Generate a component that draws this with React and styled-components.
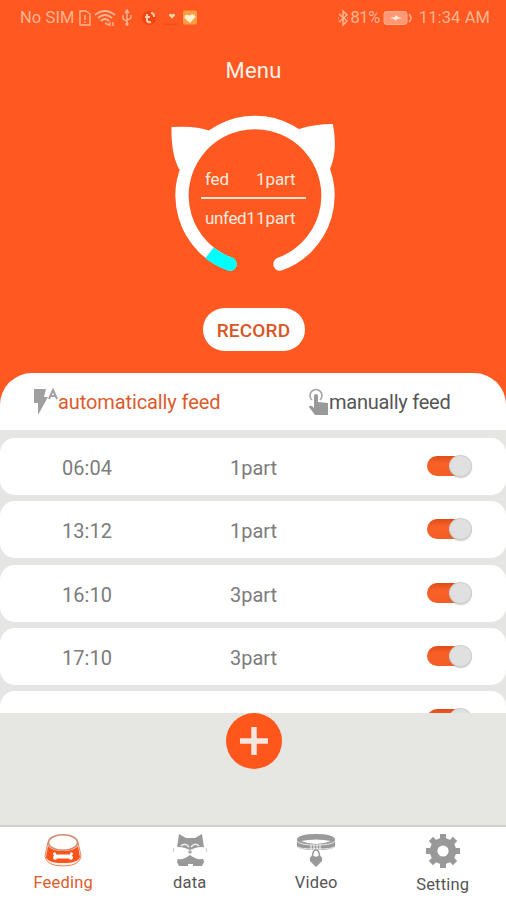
import React from "react";
import styled, { createGlobalStyle } from "styled-components";

const GlobalStyle = createGlobalStyle`
  * { box-sizing: border-box; }
  body { margin: 0; background: #fff; font-family: Roboto, "Liberation Sans", sans-serif; }
`;

const Screen = styled.main`
  width: 506px;
  height: 900px;
  overflow: hidden;
  display: flex;
  flex-direction: column;
  background: #e6e7e3;
`;

const Hero = styled.section`
  height: 373px;
  flex: none;
  background: #ff5921;
  display: flex;
  flex-direction: column;
  align-items: center;
  color: #ffe9df;
`;

const StatusBar = styled.header`
  width: 100%;
  height: 36px;
  padding: 0 16px 0 20px;
  display: flex;
  justify-content: space-between;
  align-items: center;
  font-size: 16.5px;
  line-height: 20px;
  color: #ffb492;
`;

const StatusGroup = styled.div`
  display: flex;
  align-items: center;
  white-space: nowrap;
`;

const StatusText = styled.span`
  letter-spacing: ${(p) => p.$tracking || "0"};
`;

const Title = styled.h1`
  margin: 21px 0 0 1px;
  height: 28px;
  line-height: 28px;
  font-size: 22px;
  font-weight: 400;
  letter-spacing: 0.25px;
  color: #fff1ea;
`;

const Gauge = styled.div`
  width: 170px;
  height: 166px;
  margin: 23px 0 0 4px;
  display: grid;

  > * { grid-area: 1 / 1; }
`;

const Readings = styled.div`
  width: 105px;
  margin: 61px 0 0 31px;
`;

const Reading = styled.div`
  display: grid;
  grid-template-columns: 51px auto;
  justify-content: start;
  padding-left: 4px;
  height: ${(p) => (p.$first ? "30px" : "38px")};
  line-height: ${(p) => (p.$first ? "20px" : "39px")};
  border-bottom: ${(p) => (p.$first ? "2px solid #ffe3d2" : "none")};
  font-size: 17px;
  letter-spacing: -0.1px;
  white-space: nowrap;
`;

const Remaining = styled.span`
  letter-spacing: -0.35px;
`;

const RecordButton = styled.button`
  width: 102px;
  height: 43px;
  margin: 34px 0 0 1px;
  padding: 1px 0 0;
  border: 0;
  border-radius: 22px;
  background: #fff;
  color: #d95525;
  font: 500 19px Roboto, sans-serif;
  letter-spacing: 0.2px;
`;

const Tabs = styled.div`
  height: 57px;
  flex: none;
  margin-bottom: 8px;
  display: flex;
  background: linear-gradient(#ff5921 0 34px, #e6e7e3 34px);
`;

const Tab = styled.div`
  width: 253px;
  padding: ${(p) => (p.$active ? "0 0 0 32px" : "0 0 0 55px")};
  background: #fff;
  border-radius: ${(p) => (p.$active ? "32px 0 0 0" : "0 32px 0 0")};
  display: flex;
  align-items: center;
  color: ${(p) => (p.$active ? "#dc5a2b" : "#555")};
  font-size: 20px;
  letter-spacing: ${(p) => (p.$active ? "-0.1px" : "-0.25px")};
  white-space: nowrap;

  svg { flex: none; }
`;

const Schedule = styled.div`
  height: 275px;
  flex: none;
  overflow: hidden;
  background: #e5e5e4;
`;

const FeedRow = styled.div`
  height: 57px;
  margin-bottom: 6.25px;
  border-radius: 15px;
  background: #fff;
  display: grid;
  grid-template-columns: 168px 195px 50px;
  align-items: center;
  padding: 3px 0 0 62px;
  font-size: 20px;
  color: #7c7c7c;
`;

const Time = styled.span`
  letter-spacing: 0.05px;
`;

const Switch = styled.span`
  display: flex;
  justify-content: flex-end;
  width: 44px;
  height: 20px;
  margin: -4px 0 0 2px;
  border-radius: 10px;
  background: linear-gradient(#df4c18, #f76127 35%, #f35e27);
`;

const Knob = styled.span`
  width: 23px;
  height: 22px;
  margin: -1px -1px 0 0;
  border-radius: 50%;
  background: #e0e0e1;
  border: 1px solid #d0d0d0;
  box-shadow: 0 1px 1px #99999980;
`;

const AddArea = styled.div`
  height: 112px;
  flex: none;
  display: flex;
  justify-content: center;
  align-items: flex-start;
`;

const AddButton = styled.button`
  width: 56px;
  height: 56px;
  margin-left: 1px;
  padding: 0;
  border: 0;
  border-radius: 50%;
  background: #ff561c;

  svg { display: block; }
`;

const Navigation = styled.nav`
  flex: 1;
  display: grid;
  grid-template-columns: repeat(4, 126.5px);
  background: #fff;
  border-top: 2px solid #d1d1ce;
`;

const NavItem = styled.div`
  display: flex;
  flex-direction: column;
  align-items: center;
  padding-top: 6px;
  color: ${(p) => (p.$active ? "#df5b2b" : "#555")};
  font-size: 16.5px;
  letter-spacing: 0.2px;
  line-height: 20px;

  span { margin-top: 6px; }
`;

function StatusIcons() {
  return (
    <svg width="122" height="22" viewBox="0 0 122 22" fill="none" stroke="#ffb492" strokeWidth="1.4">
      <path d="M5 4h6l4 3v11H5zM10 8v5M10 14.5v1.5" />
      <path d="M20 8q10-8 20 0M23 11q7-6 14 0M26 14q4-4 8 0" strokeWidth="2" />
      <path d="M30 16l4 2M35 15v4M38 15v4" />
      <path d="M52 3v13M50 6l2-3 2 3M48 8v3q0 2 4 3M56 8v2q0 2-4 3" />
      <circle cx="52" cy="17" r="1" fill="#ffb492" />
      <circle cx="74" cy="11" r="7" fill="#f34510" stroke="none" />
      <path d="M72 7v6q0 3 4 2M70 10h5M76 6q3 0 3 4" stroke="#ffd0b5" strokeWidth="2" />
      <path d="M88 17q7 1 15 0" stroke="#ed501b" />
      <path d="M97 11.5L94 8.5q0-3 3-1 3-2 3 1z" fill="#ffd8ae" stroke="none" />
      <rect x="108" y="3.5" width="14" height="14" rx="2" fill="#ff9d43" stroke="none" />
      <path d="M115 16L109.5 11q0-5 5-2.5 5-3 6 1.5z" fill="#fff0d2" stroke="none" />
    </svg>
  );
}

function BluetoothIcon() {
  return (
    <svg width="12" height="18" viewBox="0 0 12 18" fill="none" stroke="#ffb492" strokeWidth="1.5">
      <path d="M1 5l8 7-4 4V2l4 4-8 7M0 9h1M9 9h1" />
    </svg>
  );
}

function BatteryIcon() {
  return (
    <svg width="39" height="18" viewBox="0 0 39 18">
      <rect x="4" y="2.5" width="23" height="13" rx="2.5" fill="#ff9873" stroke="#ffac8b" />
      <path d="M29 5q4 4 0 8" fill="none" stroke="#ffb492" strokeWidth="1.5" />
      <path d="M10 9l5-1 1-2 2 2 4 1-5 1-1 2-2-2z" fill="#fff0dc" />
    </svg>
  );
}

function CatRing() {
  return (
    <svg width="170" height="166" viewBox="170 108 170 166">
      <path d="M171.5 127Q196 125.5 209 130.5L187 171L179 169Q171 154 171.5 127Z" fill="#fff" />
      <path d="M299 129Q315 124 332.8 124Q338 151 330 169L322 171Z" fill="#fff" />
      <circle cx="255" cy="195.5" r="73" fill="#ff5921" />
      <path d="M230 264.1A73 73 0 1 1 280 264.1" fill="none" stroke="#fff" strokeWidth="13.3" strokeLinecap="round" />
      <path d="M230 264.1A73 73 0 0 1 209.5 252.9" fill="none" stroke="#00ffff" strokeWidth="13.6" />
      <circle cx="230" cy="264.1" r="6.8" fill="#00ffff" />
    </svg>
  );
}

function AutoIcon() {
  return (
    <svg width="26" height="28" viewBox="0 0 26 28" fill="#a0a0a0">
      <path d="M2 1h12l-2 8h4L6 27V15H2z" />
      <path d="M17 11l4-9 4 9M18.5 8h5" fill="none" stroke="#a0a0a0" strokeWidth="2" />
    </svg>
  );
}

function TouchIcon() {
  return (
    <svg width="21" height="28" viewBox="0 0 21 28" fill="#999">
      <path d="M4 12A6 6 0 1 1 12 12" fill="none" stroke="#a3a3a3" strokeWidth="1.6" />
      <path d="M6 8q0-2 2-2t2 2v6l10 1v12H7L1 19q0-2 3-1l2 2z" />
    </svg>
  );
}

function BowlIcon() {
  return (
    <svg width="38" height="34" viewBox="0 0 38 34">
      <path d="M4 9L1 23Q2 33 19 33T37 23L34 9z" fill="#fff1e9" stroke="#e7845e" />
      <path d="M4 13L2 24q2 6 17 6t17-6l-2-11q-4 5-15 5T4 13z" fill="#f75519" />
      <ellipse cx="19" cy="9.5" rx="14.5" ry="7.8" fill="#fffdf9" stroke="#d28a70" strokeWidth="1.6" />
      <path d="M12 21.5h14q0-3 2-2t0 3q2 2 0 4-2 1-3-1H13q-1 2-3 1-2-2 0-4-2-2 0-3 2-1 2 2z" fill="#fff" />
    </svg>
  );
}

function CatIcon() {
  return (
    <svg width="36" height="34" viewBox="0 0 36 34">
      <path d="M7 1l7 4h9l7-4 2 14-1 10 1 4-2 4h-9v-2h-5v2H7l-2-4 1-4-1-10z" fill="#999" />
      <path d="M0 17q4-5 13-2l5 2 5-2q9-3 13 2 0 9-6 9-6 1-12-4-6 5-12 4-6 0-6-9z" fill="#fff" />
      <path d="M9 13q4-4 8 1M19 14q4-5 8-1" fill="none" stroke="#eee" strokeWidth="1.6" />
      <path d="M2 15L1 19M34 15l1 4" stroke="#ccc" />
      <circle cx="18" cy="19" r="1.8" fill="#aaa" />
    </svg>
  );
}

function CollarIcon() {
  return (
    <svg width="40" height="34" viewBox="0 0 40 34">
      <path d="M1 6q2-5 19-5t19 5v7q-1 4-19 4T1 13z" fill="#999" />
      <path d="M5 8q15-3 30 0-15 6-30 0z" fill="#fff" />
      <path d="M1 8q2 4 19 4t19-4M2 14q2 2 18 2t18-2" fill="none" stroke="#e9e9e9" />
      <path d="M15 12v5M18 12v5M21 12v5M24 12v5" stroke="#fff" />
      <path d="M16.5 24q0-7 3.5-7t3.5 7" fill="none" stroke="#999" strokeWidth="1.5" />
      <path d="M20 34l-6-6q-1-5 3-5 2 0 3 1 1-1 3-1 4 0 3 5z" fill="#999" />
    </svg>
  );
}

function GearIcon() {
  const teeth = [0, 45, 90, 135, 180, 225, 270, 315];
  return (
    <svg width="36" height="36" viewBox="0 0 36 36" fill="#999">
      {teeth.map((angle) => (
        <path key={angle} d="M15 1h6v4l3 3H12l3-3z" transform={`rotate(${angle} 18 18)`} />
      ))}
      <circle cx="18" cy="18" r="9.3" fill="none" stroke="#999" strokeWidth="7.4" />
    </svg>
  );
}

const feeds = [
  ["06:04", "1part"],
  ["13:12", "1part"],
  ["16:10", "3part"],
  ["17:10", "3part"],
  ["", ""],
];

const navItems = [
  { label: "Feeding", Icon: BowlIcon },
  { label: "data", Icon: CatIcon },
  { label: "Video", Icon: CollarIcon },
  { label: "Setting", Icon: GearIcon },
];

export default function App() {
  return (
    <Screen>
      <GlobalStyle />
      <Hero>
        <StatusBar>
          <StatusGroup><StatusText $tracking="0.1px">No SIM</StatusText><StatusIcons /></StatusGroup>
          <StatusGroup><BluetoothIcon /><StatusText $tracking="-0.4px">81%</StatusText><BatteryIcon /><StatusText $tracking="0.1px">11:34 AM</StatusText></StatusGroup>
        </StatusBar>
        <Title>Menu</Title>
        <Gauge>
          <CatRing />
          <Readings>
            <Reading $first><span>fed</span><span>1part</span></Reading>
            <Reading><Remaining>unfed1</Remaining><span>1part</span></Reading>
          </Readings>
        </Gauge>
        <RecordButton>RECORD</RecordButton>
      </Hero>
      <Tabs>
        <Tab $active><AutoIcon />automatically feed</Tab>
        <Tab><TouchIcon />manually feed</Tab>
      </Tabs>
      <Schedule>
        {feeds.map(([time, portion], index) => (
          <FeedRow key={index}><Time>{time}</Time><span>{portion}</span><Switch><Knob /></Switch></FeedRow>
        ))}
      </Schedule>
      <AddArea>
        <AddButton aria-label="Add feeding">
          <svg width="56" height="56" viewBox="0 0 56 56"><path d="M28 14v28M14 28h28" stroke="#f5e5df" strokeWidth="5.5" /></svg>
        </AddButton>
      </AddArea>
      <Navigation>
        {navItems.map(({ label, Icon }, index) => (
          <NavItem key={label} $active={index === 0}><Icon /><span>{label}</span></NavItem>
        ))}
      </Navigation>
    </Screen>
  );
}
